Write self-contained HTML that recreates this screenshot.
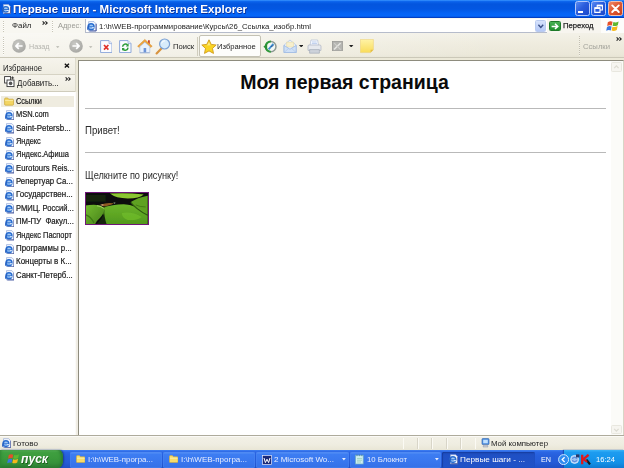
<!DOCTYPE html>
<html lang="ru">
<head>
<meta charset="utf-8">
<title>Первые шаги - Microsoft Internet Explorer</title>
<style>
*{box-sizing:border-box;margin:0;padding:0}
html,body{width:624px;height:468px;overflow:hidden;background:#fff}
body{position:relative;font-family:"Liberation Sans",sans-serif;font-size:8px;color:#000}
.a{position:absolute;display:block}
.t{position:absolute;white-space:pre;line-height:1;font-family:"Liberation Sans",sans-serif;transform-origin:0 50%}
svg{overflow:hidden}
</style>
</head>
<body>
<div class="a" style="left:0px;top:0px;width:624px;height:18.6px;background:linear-gradient(#3a96ff 0,#0a63ec 1.6px,#0355de 4px,#0357e2 9px,#0563f4 13px,#0566f8 15.8px,#0459e6 16.9px,#0238b8 17.7px,#0a3fc0 18.6px)"></div>
<svg class="a" style="left:1.6px;top:4.4px" width="9.0" height="10.0" viewBox="0 0 10 11"><path d="M1.6 0.6H7.2L9.5 3V10.4H1.6Z" fill="#f4f8ff" stroke="#8fa6d6" stroke-width="0.7"/><path d="M9.5 3V10.4H2.4" fill="none" stroke="#43539a" stroke-width="1"/><circle cx="4.2" cy="5.9" r="3.1" fill="#9fc8f6" stroke="#2a6ed0" stroke-width="1.5"/><path d="M1.4 6.1H7" stroke="#2a6ed0" stroke-width="1.1"/><path d="M5.2 7.6H7.6V6.6H5.2Z" fill="#f4f8ff"/><path d="M0.6 9.2Q0 6.4 2.2 4.4" stroke="#2458b8" stroke-width="1" fill="none"/></svg>
<div class="a" style="left:574.8px;top:1.3px;width:15px;height:15.2px;border-radius:2.5px;border:1px solid #b4c8fa;background:linear-gradient(135deg,#5a8cf4 0,#2a5cdc 45%,#1a48cc 100%)"></div><div class="a" style="left:577.8px;top:10.6px;width:5.6px;height:2.2px;background:#fff"></div>
<div class="a" style="left:591px;top:1.3px;width:15px;height:15.2px;border-radius:2.5px;border:1px solid #b4c8fa;background:linear-gradient(135deg,#5a8cf4 0,#2a5cdc 45%,#1a48cc 100%)"></div><svg class="a" style="left:591px;top:1.3px" width="15" height="15" viewBox="0 0 15 15"><path d="M6.2 4.2H11.4V9H6.2Z" fill="none" stroke="#fff" stroke-width="1.1"/><path d="M6.2 4.6H11.4" stroke="#fff" stroke-width="1.6"/><path d="M3.8 6.8H9V11.4H3.8Z" fill="#2a5cdc" stroke="#fff" stroke-width="1.1"/><path d="M3.8 7.2H9" stroke="#fff" stroke-width="1.6"/></svg>
<div class="a" style="left:607.6px;top:1.3px;width:15px;height:15.2px;border-radius:2.5px;border:1px solid #f0c0b0;background:linear-gradient(135deg,#ee8a6a 0,#e05a34 45%,#c83e1a 100%)"></div><svg class="a" style="left:607.6px;top:1.3px" width="15" height="15" viewBox="0 0 15 15"><path d="M4.2 4.4L10.8 11M10.8 4.4L4.2 11" stroke="#fff" stroke-width="1.9" stroke-linecap="round"/></svg>
<div class="a" style="left:0px;top:18.4px;width:624px;height:14.6px;background:#f8f7f1"></div>
<div class="a" style="left:0px;top:32.6px;width:624px;height:0.9px;background:#d2cfc0"></div>
<div class="a" style="left:2.6px;top:20.5px;width:1.2px;height:11px;background:repeating-linear-gradient(#c8c5b6 0,#c8c5b6 1px,#fff 1px,#fff 2px)"></div>
<div class="a" style="left:52px;top:20.5px;width:1.2px;height:11px;background:repeating-linear-gradient(#c8c5b6 0,#c8c5b6 1px,#fff 1px,#fff 2px)"></div>
<svg class="a" style="left:42px;top:20.7px" width="6" height="4" viewBox="0 0 6 4"><path d="M0.6 0.4L2.4 2L0.6 3.6M3.4 0.4L5.2 2L3.4 3.6" fill="none" stroke="#222" stroke-width="1.1"/></svg>
<div class="a" style="left:85px;top:18.6px;width:462px;height:14.4px;background:#fff;border:1px solid #b6bccb;border-right:0;border-top:0"></div>
<svg class="a" style="left:87.3px;top:21.2px" width="9.7" height="10.5" viewBox="0 0 10 11"><path d="M1.6 0.6H7.2L9.5 3V10.4H1.6Z" fill="#f4f8ff" stroke="#8fa6d6" stroke-width="0.7"/><path d="M9.5 3V10.4H2.4" fill="none" stroke="#43539a" stroke-width="1"/><circle cx="4.2" cy="5.9" r="3.1" fill="#9fc8f6" stroke="#2a6ed0" stroke-width="1.5"/><path d="M1.4 6.1H7" stroke="#2a6ed0" stroke-width="1.1"/><path d="M5.2 7.6H7.6V6.6H5.2Z" fill="#f4f8ff"/><path d="M0.6 9.2Q0 6.4 2.2 4.4" stroke="#2458b8" stroke-width="1" fill="none"/></svg>
<div class="a" style="left:534.6px;top:20px;width:11.6px;height:12px;border-radius:1.5px;background:linear-gradient(#d6e2fc,#b4c8f6);border:0.6px solid #b9cbf0"></div>
<svg class="a" style="left:534.6px;top:20px" width="12" height="12" viewBox="0 0 12 12"><path d="M3.4 4.8L5.8 7.4L8.2 4.8" fill="none" stroke="#3a4f86" stroke-width="1.4"/></svg>
<div class="a" style="left:547px;top:18.6px;width:53.5px;height:14.2px;background:#f7f5ef"></div>
<div class="a" style="left:549.4px;top:20.6px;width:11.4px;height:10.8px;border-radius:1.5px;background:linear-gradient(#49b254,#21902e);border:0.6px solid #1d7a28"></div>
<svg class="a" style="left:549.4px;top:20.6px" width="12" height="11" viewBox="0 0 12 11"><path d="M2.6 5.4H8.4M6 2.8L8.8 5.4L6 8" fill="none" stroke="#fff" stroke-width="1.5"/></svg>
<div class="a" style="left:600.5px;top:18.4px;width:23.5px;height:14.4px;background:#fdfdfb"></div>
<svg class="a" style="left:606px;top:19.6px" width="13.0" height="12.0" viewBox="-1.2 0 13 12"><path d="M0.6 2.2Q3 0.6 5.4 1.8L4.6 5.6Q2.4 4.6 0 6Z" fill="#e5502a"/><path d="M6.2 2Q8.6 3 11.4 1.4L10.6 5.2Q8 6.6 5.4 5.8Z" fill="#5fb830"/><path d="M-0.2 6.9Q2.2 5.5 4.4 6.5L3.6 10.4Q1.4 9.4 -1 10.8Z" fill="#3a78e0"/><path d="M5.2 6.7Q7.8 7.6 10.4 6.1L9.6 9.9Q7 11.4 4.4 10.6Z" fill="#f5b91a"/></svg>
<div class="a" style="left:0px;top:33.4px;width:624px;height:24.2px;background:linear-gradient(90deg,rgba(255,255,255,0.55) 0,rgba(255,255,255,0.35) 35%,rgba(255,255,255,0) 80%),linear-gradient(#f3f1e8 0,#efecdf 40%,#ebe8d9 85%,#e5e2d2 100%)"></div>
<div class="a" style="left:0px;top:57.2px;width:624px;height:1px;background:#cbc8b8"></div>
<div class="a" style="left:2.6px;top:36.5px;width:1.2px;height:18px;background:repeating-linear-gradient(#c8c5b6 0,#c8c5b6 1px,#fff 1px,#fff 2px)"></div>
<svg class="a" style="left:11.8px;top:39.3px" width="14" height="14" viewBox="0 0 14 14"><defs><radialGradient id="ng0" cx="40%" cy="35%" r="75%"><stop offset="0" stop-color="#c9c9c5"/><stop offset="1" stop-color="#a3a39f"/></radialGradient></defs><circle cx="7" cy="7" r="6.8" fill="url(#ng0)"/><path d="M10.6 7H4.2M6.8 4.2L3.8 7L6.8 9.8" fill="none" stroke="#fff" stroke-width="1.7" stroke-linejoin="round"/></svg>
<svg class="a" style="left:68.7px;top:39.3px" width="14" height="14" viewBox="0 0 14 14"><defs><radialGradient id="ng2" cx="40%" cy="35%" r="75%"><stop offset="0" stop-color="#c9c9c5"/><stop offset="1" stop-color="#a3a39f"/></radialGradient></defs><circle cx="7" cy="7" r="6.8" fill="url(#ng2)"/><path d="M3.4 7H9.8M7.2 4.2L10.2 7L7.2 9.8" fill="none" stroke="#fff" stroke-width="1.7" stroke-linejoin="round"/></svg>
<svg class="a" style="left:56.3px;top:45.6px" width="3.4" height="2.6" viewBox="0 0 3.4 2.6"><path d="M0 0H3.4L1.7 2.5Z" fill="#c4c4bc"/></svg>
<svg class="a" style="left:89.3px;top:45.6px" width="3.4" height="2.6" viewBox="0 0 3.4 2.6"><path d="M0 0H3.4L1.7 2.5Z" fill="#c4c4bc"/></svg>
<svg class="a" style="left:99.6px;top:39.6px" width="12.6" height="13.2" viewBox="0 0 12.6 13.2"><path d="M0.6 0.6H9L12 3.6V12.6H0.6Z" fill="#fbfcff" stroke="#8ea8da" stroke-width="1"/><path d="M9 0.6V3.6H12" fill="#dfe9fa" stroke="#8ea8da" stroke-width="0.7"/><path d="M4 5L8.4 9.6M8.4 5L4 9.6" stroke="#e0322a" stroke-width="1.7"/></svg>
<svg class="a" style="left:119px;top:39.6px" width="12.6" height="13.2" viewBox="0 0 12.6 13.2"><path d="M0.6 0.6H9L12 3.6V12.6H0.6Z" fill="#fbfcff" stroke="#8ea8da" stroke-width="1"/><path d="M9 0.6V3.6H12" fill="#dfe9fa" stroke="#8ea8da" stroke-width="0.7"/><path d="M3.6 6.8A2.8 2.8 0 0 1 8.6 5.2" fill="none" stroke="#2f9e3c" stroke-width="1.5"/><path d="M9.6 3.6V6.4H6.8Z" fill="#2f9e3c"/><path d="M9 7.6A2.8 2.8 0 0 1 4 9.2" fill="none" stroke="#2f9e3c" stroke-width="1.5"/><path d="M3 10.8V8H5.8Z" fill="#2f9e3c"/></svg>
<svg class="a" style="left:136.6px;top:38.2px" width="16" height="16" viewBox="0 0 16 16"><path d="M11 2.2H12.8V6H11Z" fill="#c8402a"/><path d="M0.6 8.2L7.8 1.4L15.2 8.2L13.6 9.4L7.8 4.2L2.2 9.4Z" fill="#f0a43c" stroke="#d08a2a" stroke-width="0.5"/><path d="M2.8 8.6L7.8 4.2L12.8 8.6V14.6H2.8Z" fill="#e9f1fc" stroke="#a9bfe2" stroke-width="0.7"/><path d="M6.6 10H9.2V14.6H6.6Z" fill="#6c94d8"/><path d="M2.8 14.8H12.8" stroke="#9ab0d4" stroke-width="0.9"/></svg>
<svg class="a" style="left:155.2px;top:37.6px" width="16" height="17" viewBox="0 0 16 17"><path d="M6.4 10.4L1.6 15.4" stroke="#d89440" stroke-width="2.2" stroke-linecap="round"/><circle cx="9.6" cy="6" r="5" fill="#d7ebfb" stroke="#7aa0d4" stroke-width="1.2"/><path d="M6.6 5.4A3.2 3.2 0 0 1 10 2.8" fill="none" stroke="#fff" stroke-width="1"/></svg>
<div class="a" style="left:196.8px;top:36.5px;width:0.8px;height:19px;background:#d0cdbd"></div>
<div class="a" style="left:198.8px;top:35.2px;width:62px;height:22px;background:#fdfdfb;border:0.8px solid #c4c2b4;border-radius:2px"></div>
<svg class="a" style="left:200.6px;top:39.2px" width="16" height="15.4" viewBox="0 0 16 15.4"><path d="M8 0.8L10.2 5.4L15.2 6L11.5 9.4L12.5 14.4L8 11.9L3.5 14.4L4.5 9.4L0.8 6L5.8 5.4Z" fill="#f9d423" stroke="#cf9a1c" stroke-width="0.9" stroke-linejoin="round"/><path d="M8 3L9.4 6.2L6 6.4Z" fill="#fdeb80"/></svg>
<svg class="a" style="left:263px;top:40px" width="15.4" height="13.2" viewBox="0 0 15.4 13.2"><circle cx="7.8" cy="6.6" r="5.2" fill="#f2f8f4" stroke="#8e9a94" stroke-width="1.5"/><path d="M7.8 1.4A5.2 5.2 0 0 0 7.8 11.8" fill="none" stroke="#2e9a3a" stroke-width="2"/><path d="M0.4 6.8L4.2 3.6V9.8Z" fill="#2a8f34"/><path d="M5.6 9.4L10.4 3.8" stroke="#3f8fd0" stroke-width="1.8"/><path d="M7.8 6.6L10.6 5.6" stroke="#2a4a8a" stroke-width="0.8"/></svg>
<svg class="a" style="left:283.4px;top:38.8px" width="14.2" height="14.6" viewBox="0 0 14.2 14.6"><path d="M1 6.2L7 1L13.2 6.2V13.6H1Z" fill="#eef4fc" stroke="#b4c8e6" stroke-width="0.8"/><path d="M3.6 3.2H10.6V8H3.6Z" fill="#f7efcc" stroke="#e6d69a" stroke-width="0.5"/><path d="M1 6.4L7 10.2L13.2 6.4V13.6H1Z" fill="#cfe0f6" stroke="#9ab8e2" stroke-width="0.8"/><path d="M1 13.6L5.6 9.4M13.2 13.6L8.6 9.4" stroke="#a8c2e6" stroke-width="0.6"/></svg>
<svg class="a" style="left:298.6px;top:44.8px" width="4.4" height="2.6" viewBox="0 0 4.4 2.6"><path d="M0 0H4.4L2.2 2.5Z" fill="#222"/></svg>
<svg class="a" style="left:307.2px;top:38.8px" width="15" height="15.4" viewBox="0 0 15 15.4"><path d="M4 1H10.6L11.6 6.6H3Z" fill="#f6f9ff" stroke="#b4c0d6" stroke-width="0.7"/><path d="M1 7Q1 6 2.2 6H12.6Q14 6 14 7.2V11.4H1Z" fill="#e6e9ee" stroke="#aab2c0" stroke-width="0.7"/><path d="M2.6 10.6H12.4V14.2H2.6Z" fill="#cdd2da" stroke="#9aa2b2" stroke-width="0.6"/><path d="M5 3H9.6M4.8 4.6H10" stroke="#a4bce4" stroke-width="0.7"/></svg>
<svg class="a" style="left:331.6px;top:40.8px" width="11" height="10.6" viewBox="0 0 11 10.6"><rect x="0.4" y="0.4" width="10" height="9.6" fill="#b4b4b0" stroke="#9a9a96" stroke-width="0.8"/><path d="M2 8.6L8.6 2" stroke="#e8e8e4" stroke-width="1.5"/><path d="M2.2 2.2L8.6 8.6" stroke="#d0d0cc" stroke-width="1.1"/></svg>
<svg class="a" style="left:349.40000000000003px;top:44.8px" width="4.4" height="2.6" viewBox="0 0 4.4 2.6"><path d="M0 0H4.4L2.2 2.5Z" fill="#222"/></svg>
<svg class="a" style="left:360px;top:39.4px" width="14" height="14.2" viewBox="0 0 14 14.2"><defs><linearGradient id="nt" x1="0" y1="0" x2="0" y2="1"><stop offset="0" stop-color="#fff3a6"/><stop offset="1" stop-color="#f9dc5a"/></linearGradient></defs><path d="M0.4 0.4H13.4V10.8L10.6 13.6H0.4Z" fill="url(#nt)" stroke="#ecd27a" stroke-width="0.6"/><path d="M13.4 10.8H10.6V13.6Z" fill="#e2bc48"/></svg>
<div class="a" style="left:578.8px;top:36px;width:0.9px;height:20px;background:repeating-linear-gradient(#c2bfb0 0,#c2bfb0 1px,#f4f2ea 1px,#f4f2ea 2px)"></div>
<svg class="a" style="left:616px;top:36.8px" width="6" height="4" viewBox="0 0 6 4"><path d="M0.6 0.4L2.4 2L0.6 3.6M3.4 0.4L5.2 2L3.4 3.6" fill="none" stroke="#222" stroke-width="1.1"/></svg>
<div class="a" style="left:0px;top:58.2px;width:624px;height:378px;background:#ece9d8"></div>
<div class="a" style="left:0px;top:58.2px;width:74.6px;height:16.2px;background:linear-gradient(#f6f4ec,#efede2)"></div>
<div class="a" style="left:0px;top:74.3px;width:74.6px;height:0.9px;background:#d6d3c4"></div>
<div class="a" style="left:0px;top:75.2px;width:74.6px;height:15.6px;background:linear-gradient(#f6f4ec,#efede2)"></div>
<div class="a" style="left:0px;top:90.6px;width:74.6px;height:1.2px;background:#cfccbc"></div>
<div class="a" style="left:0px;top:91.8px;width:76.2px;height:343.8px;background:linear-gradient(90deg,#fff 0,#fff 75px,#f6f4ee 76.2px)"></div>
<div class="a" style="left:74.6px;top:58.2px;width:1px;height:33.6px;background:#dedbcd"></div>
<div class="a" style="left:76.2px;top:91.8px;width:2px;height:343.8px;background:#f0ede4"></div>
<svg class="a" style="left:63.6px;top:62.6px" width="6" height="5.4" viewBox="0 0 6 5.4"><path d="M0.8 0.8L5 4.6M5 0.8L0.8 4.6" stroke="#111" stroke-width="1.3"/></svg>
<svg class="a" style="left:64.6px;top:77px" width="6" height="4" viewBox="0 0 6 4"><path d="M0.6 0.4L2.4 2L0.6 3.6M3.4 0.4L5.2 2L3.4 3.6" fill="none" stroke="#222" stroke-width="1.1"/></svg>
<svg class="a" style="left:3.6px;top:76.4px" width="11" height="11.4" viewBox="0 0 11 11.4"><rect x="0.6" y="0.6" width="6" height="6.4" fill="#fff" stroke="#333" stroke-width="0.9"/><rect x="3" y="4" width="7" height="6.6" fill="#fff" stroke="#333" stroke-width="0.9"/><circle cx="6.6" cy="7.4" r="1.8" fill="#555"/><path d="M8.6 0.4V3.4M7.1 1.9H10.1" stroke="#222" stroke-width="0.8"/></svg>
<div class="a" style="left:1.4px;top:95.8px;width:72.6px;height:11.4px;background:#efece0"></div>
<svg class="a" style="left:4.4px;top:96.9px" width="10.1" height="8.9" viewBox="0 0 10 9"><path d="M0.5 2.2Q0.5 1 1.6 1H3.6L4.6 2.2H8.6Q9.5 2.2 9.5 3.2V7.4Q9.5 8.3 8.6 8.3H1.4Q0.5 8.3 0.5 7.4Z" fill="#f3d562" stroke="#c9a536" stroke-width="0.7"/><path d="M1 3.6H9" stroke="#fbe9a0" stroke-width="1"/></svg>
<svg class="a" style="left:4.8px;top:109.77999999999999px" width="9.5" height="10.5" viewBox="0 0 10 11"><path d="M1.6 0.6H7.2L9.5 3V10.4H1.6Z" fill="#f4f8ff" stroke="#8fa6d6" stroke-width="0.7"/><path d="M9.5 3V10.4H2.4" fill="none" stroke="#43539a" stroke-width="1"/><circle cx="4.2" cy="5.9" r="3.1" fill="#9fc8f6" stroke="#2a6ed0" stroke-width="1.5"/><path d="M1.4 6.1H7" stroke="#2a6ed0" stroke-width="1.1"/><path d="M5.2 7.6H7.6V6.6H5.2Z" fill="#f4f8ff"/><path d="M0.6 9.2Q0 6.4 2.2 4.4" stroke="#2458b8" stroke-width="1" fill="none"/></svg>
<svg class="a" style="left:4.8px;top:123.15999999999998px" width="9.5" height="10.5" viewBox="0 0 10 11"><path d="M1.6 0.6H7.2L9.5 3V10.4H1.6Z" fill="#f4f8ff" stroke="#8fa6d6" stroke-width="0.7"/><path d="M9.5 3V10.4H2.4" fill="none" stroke="#43539a" stroke-width="1"/><circle cx="4.2" cy="5.9" r="3.1" fill="#9fc8f6" stroke="#2a6ed0" stroke-width="1.5"/><path d="M1.4 6.1H7" stroke="#2a6ed0" stroke-width="1.1"/><path d="M5.2 7.6H7.6V6.6H5.2Z" fill="#f4f8ff"/><path d="M0.6 9.2Q0 6.4 2.2 4.4" stroke="#2458b8" stroke-width="1" fill="none"/></svg>
<svg class="a" style="left:4.8px;top:136.54000000000002px" width="9.5" height="10.5" viewBox="0 0 10 11"><path d="M1.6 0.6H7.2L9.5 3V10.4H1.6Z" fill="#f4f8ff" stroke="#8fa6d6" stroke-width="0.7"/><path d="M9.5 3V10.4H2.4" fill="none" stroke="#43539a" stroke-width="1"/><circle cx="4.2" cy="5.9" r="3.1" fill="#9fc8f6" stroke="#2a6ed0" stroke-width="1.5"/><path d="M1.4 6.1H7" stroke="#2a6ed0" stroke-width="1.1"/><path d="M5.2 7.6H7.6V6.6H5.2Z" fill="#f4f8ff"/><path d="M0.6 9.2Q0 6.4 2.2 4.4" stroke="#2458b8" stroke-width="1" fill="none"/></svg>
<svg class="a" style="left:4.8px;top:149.92000000000002px" width="9.5" height="10.5" viewBox="0 0 10 11"><path d="M1.6 0.6H7.2L9.5 3V10.4H1.6Z" fill="#f4f8ff" stroke="#8fa6d6" stroke-width="0.7"/><path d="M9.5 3V10.4H2.4" fill="none" stroke="#43539a" stroke-width="1"/><circle cx="4.2" cy="5.9" r="3.1" fill="#9fc8f6" stroke="#2a6ed0" stroke-width="1.5"/><path d="M1.4 6.1H7" stroke="#2a6ed0" stroke-width="1.1"/><path d="M5.2 7.6H7.6V6.6H5.2Z" fill="#f4f8ff"/><path d="M0.6 9.2Q0 6.4 2.2 4.4" stroke="#2458b8" stroke-width="1" fill="none"/></svg>
<svg class="a" style="left:4.8px;top:163.3px" width="9.5" height="10.5" viewBox="0 0 10 11"><path d="M1.6 0.6H7.2L9.5 3V10.4H1.6Z" fill="#f4f8ff" stroke="#8fa6d6" stroke-width="0.7"/><path d="M9.5 3V10.4H2.4" fill="none" stroke="#43539a" stroke-width="1"/><circle cx="4.2" cy="5.9" r="3.1" fill="#9fc8f6" stroke="#2a6ed0" stroke-width="1.5"/><path d="M1.4 6.1H7" stroke="#2a6ed0" stroke-width="1.1"/><path d="M5.2 7.6H7.6V6.6H5.2Z" fill="#f4f8ff"/><path d="M0.6 9.2Q0 6.4 2.2 4.4" stroke="#2458b8" stroke-width="1" fill="none"/></svg>
<svg class="a" style="left:4.8px;top:176.68px" width="9.5" height="10.5" viewBox="0 0 10 11"><path d="M1.6 0.6H7.2L9.5 3V10.4H1.6Z" fill="#f4f8ff" stroke="#8fa6d6" stroke-width="0.7"/><path d="M9.5 3V10.4H2.4" fill="none" stroke="#43539a" stroke-width="1"/><circle cx="4.2" cy="5.9" r="3.1" fill="#9fc8f6" stroke="#2a6ed0" stroke-width="1.5"/><path d="M1.4 6.1H7" stroke="#2a6ed0" stroke-width="1.1"/><path d="M5.2 7.6H7.6V6.6H5.2Z" fill="#f4f8ff"/><path d="M0.6 9.2Q0 6.4 2.2 4.4" stroke="#2458b8" stroke-width="1" fill="none"/></svg>
<svg class="a" style="left:4.8px;top:190.06px" width="9.5" height="10.5" viewBox="0 0 10 11"><path d="M1.6 0.6H7.2L9.5 3V10.4H1.6Z" fill="#f4f8ff" stroke="#8fa6d6" stroke-width="0.7"/><path d="M9.5 3V10.4H2.4" fill="none" stroke="#43539a" stroke-width="1"/><circle cx="4.2" cy="5.9" r="3.1" fill="#9fc8f6" stroke="#2a6ed0" stroke-width="1.5"/><path d="M1.4 6.1H7" stroke="#2a6ed0" stroke-width="1.1"/><path d="M5.2 7.6H7.6V6.6H5.2Z" fill="#f4f8ff"/><path d="M0.6 9.2Q0 6.4 2.2 4.4" stroke="#2458b8" stroke-width="1" fill="none"/></svg>
<svg class="a" style="left:4.8px;top:203.44px" width="9.5" height="10.5" viewBox="0 0 10 11"><path d="M1.6 0.6H7.2L9.5 3V10.4H1.6Z" fill="#f4f8ff" stroke="#8fa6d6" stroke-width="0.7"/><path d="M9.5 3V10.4H2.4" fill="none" stroke="#43539a" stroke-width="1"/><circle cx="4.2" cy="5.9" r="3.1" fill="#9fc8f6" stroke="#2a6ed0" stroke-width="1.5"/><path d="M1.4 6.1H7" stroke="#2a6ed0" stroke-width="1.1"/><path d="M5.2 7.6H7.6V6.6H5.2Z" fill="#f4f8ff"/><path d="M0.6 9.2Q0 6.4 2.2 4.4" stroke="#2458b8" stroke-width="1" fill="none"/></svg>
<svg class="a" style="left:4.8px;top:216.82px" width="9.5" height="10.5" viewBox="0 0 10 11"><path d="M1.6 0.6H7.2L9.5 3V10.4H1.6Z" fill="#f4f8ff" stroke="#8fa6d6" stroke-width="0.7"/><path d="M9.5 3V10.4H2.4" fill="none" stroke="#43539a" stroke-width="1"/><circle cx="4.2" cy="5.9" r="3.1" fill="#9fc8f6" stroke="#2a6ed0" stroke-width="1.5"/><path d="M1.4 6.1H7" stroke="#2a6ed0" stroke-width="1.1"/><path d="M5.2 7.6H7.6V6.6H5.2Z" fill="#f4f8ff"/><path d="M0.6 9.2Q0 6.4 2.2 4.4" stroke="#2458b8" stroke-width="1" fill="none"/></svg>
<svg class="a" style="left:4.8px;top:230.20000000000002px" width="9.5" height="10.5" viewBox="0 0 10 11"><path d="M1.6 0.6H7.2L9.5 3V10.4H1.6Z" fill="#f4f8ff" stroke="#8fa6d6" stroke-width="0.7"/><path d="M9.5 3V10.4H2.4" fill="none" stroke="#43539a" stroke-width="1"/><circle cx="4.2" cy="5.9" r="3.1" fill="#9fc8f6" stroke="#2a6ed0" stroke-width="1.5"/><path d="M1.4 6.1H7" stroke="#2a6ed0" stroke-width="1.1"/><path d="M5.2 7.6H7.6V6.6H5.2Z" fill="#f4f8ff"/><path d="M0.6 9.2Q0 6.4 2.2 4.4" stroke="#2458b8" stroke-width="1" fill="none"/></svg>
<svg class="a" style="left:4.8px;top:243.58px" width="9.5" height="10.5" viewBox="0 0 10 11"><path d="M1.6 0.6H7.2L9.5 3V10.4H1.6Z" fill="#f4f8ff" stroke="#8fa6d6" stroke-width="0.7"/><path d="M9.5 3V10.4H2.4" fill="none" stroke="#43539a" stroke-width="1"/><circle cx="4.2" cy="5.9" r="3.1" fill="#9fc8f6" stroke="#2a6ed0" stroke-width="1.5"/><path d="M1.4 6.1H7" stroke="#2a6ed0" stroke-width="1.1"/><path d="M5.2 7.6H7.6V6.6H5.2Z" fill="#f4f8ff"/><path d="M0.6 9.2Q0 6.4 2.2 4.4" stroke="#2458b8" stroke-width="1" fill="none"/></svg>
<svg class="a" style="left:4.8px;top:256.96px" width="9.5" height="10.5" viewBox="0 0 10 11"><path d="M1.6 0.6H7.2L9.5 3V10.4H1.6Z" fill="#f4f8ff" stroke="#8fa6d6" stroke-width="0.7"/><path d="M9.5 3V10.4H2.4" fill="none" stroke="#43539a" stroke-width="1"/><circle cx="4.2" cy="5.9" r="3.1" fill="#9fc8f6" stroke="#2a6ed0" stroke-width="1.5"/><path d="M1.4 6.1H7" stroke="#2a6ed0" stroke-width="1.1"/><path d="M5.2 7.6H7.6V6.6H5.2Z" fill="#f4f8ff"/><path d="M0.6 9.2Q0 6.4 2.2 4.4" stroke="#2458b8" stroke-width="1" fill="none"/></svg>
<svg class="a" style="left:4.8px;top:270.34px" width="9.5" height="10.5" viewBox="0 0 10 11"><path d="M1.6 0.6H7.2L9.5 3V10.4H1.6Z" fill="#f4f8ff" stroke="#8fa6d6" stroke-width="0.7"/><path d="M9.5 3V10.4H2.4" fill="none" stroke="#43539a" stroke-width="1"/><circle cx="4.2" cy="5.9" r="3.1" fill="#9fc8f6" stroke="#2a6ed0" stroke-width="1.5"/><path d="M1.4 6.1H7" stroke="#2a6ed0" stroke-width="1.1"/><path d="M5.2 7.6H7.6V6.6H5.2Z" fill="#f4f8ff"/><path d="M0.6 9.2Q0 6.4 2.2 4.4" stroke="#2458b8" stroke-width="1" fill="none"/></svg>
<div class="a" style="left:78.2px;top:60px;width:545.8px;height:376px;background:#fff;border:1.2px solid #8e8c7e;border-right:1.4px solid #d8d5c6;border-bottom:1px solid #9d9b8d"></div>
<div class="a" style="left:611px;top:61.4px;width:11.6px;height:373.6px;background:#fbfbf8"></div>
<div class="a" style="left:611.4px;top:62.4px;width:10.6px;height:9.8px;background:#f6f5f0;border:0.6px solid #e8e7df;border-radius:1.5px"></div>
<svg class="a" style="left:611.4px;top:62.4px" width="11" height="10" viewBox="0 0 11 10"><path d="M3.2 6.2L5.4 3.8L7.6 6.2" fill="none" stroke="#dcdbd2" stroke-width="1.2"/></svg>
<div class="a" style="left:611.4px;top:424.6px;width:10.6px;height:9.8px;background:#f6f5f0;border:0.6px solid #e8e7df;border-radius:1.5px"></div>
<svg class="a" style="left:611.4px;top:424.6px" width="11" height="10" viewBox="0 0 11 10"><path d="M3.2 3.8L5.4 6.2L7.6 3.8" fill="none" stroke="#dcdbd2" stroke-width="1.2"/></svg>
<h1 class="a" style="left:79.5px;top:70.6px;width:530px;text-align:center;font-size:19.5px;line-height:22px;font-weight:bold;color:#0a0a0a">Моя первая страница</h1>
<div class="a" style="left:84.8px;top:108.1px;width:520.8px;height:1.3px;background:#b9b9b9"></div>
<div class="a" style="left:84.8px;top:152px;width:520.8px;height:1.3px;background:#b9b9b9"></div>
<svg class="a" style="left:85.1px;top:191.8px;border:1.2px solid #6f1678" width="63.7" height="32.9" viewBox="0 0 62 31" preserveAspectRatio="none"><defs><filter id="bl" x="-10%" y="-10%" width="120%" height="120%"><feGaussianBlur stdDeviation="0.75"/></filter><clipPath id="cp"><rect x="0" y="0" width="62" height="31"/></clipPath><linearGradient id="lg1" x1="0" y1="0" x2="0" y2="1"><stop offset="0" stop-color="#6cb42a"/><stop offset="1" stop-color="#4f961c"/></linearGradient><linearGradient id="lg2" x1="0" y1="0" x2="1" y2="1"><stop offset="0" stop-color="#74bc30"/><stop offset="1" stop-color="#447f18"/></linearGradient></defs><rect x="-1" y="-1" width="64" height="33" fill="#0d0f08"/><g clip-path="url(#cp)"><g filter="url(#bl)"><rect x="-2" y="-2" width="66" height="35" fill="#0d0f08"/><path d="M-1 2H20V9H-1Z" fill="#12200c"/><path d="M24 0.6Q40 -0.6 58 1.4Q54 5.4 42 5.6Q30 5.4 24 0.6Z" fill="#8cc632"/><path d="M45 9Q52 4.5 63 2.5V24Q52 20 45 9Z" fill="#5ea122"/><path d="M17 15Q26 11.4 38 11.4Q50 11.6 63 22V33H21Q16 24 17 15Z" fill="url(#lg1)"/><path d="M36 20Q46 18 56 24Q50 28 42 27Q36 25 36 20Z" fill="#6fba2a" opacity="0.8"/><path d="M-1 12.6Q7 11.4 13 12.2Q17 13.4 18.4 15.6Q18 21 14 25Q10 28 8 33H-1Z" fill="url(#lg2)"/><path d="M11 12.8Q15 13 18 15.4" stroke="#a4d660" stroke-width="1.1" fill="none"/><path d="M15 11.6Q21 9.2 28 10.4Q24 13.4 17 13.2Z" fill="#8e5a24"/><path d="M13.4 12L17.4 11.2L17.4 12.8Z" fill="#d8b48a"/><path d="M27.4 9.6L29.6 9.4L29 11.2Z" fill="#7a827a"/><path d="M18.4 16Q17.8 23 21 32H10Q13 28.4 16 25Q18 21 18.4 16Z" fill="#16280c"/><path d="M45 9.4Q50 16 62 22.4" stroke="#2f5c10" stroke-width="1.1" fill="none"/><path d="M50 12Q54 14 60 14" stroke="#3f7416" stroke-width="0.8" fill="none"/><path d="M0 22Q5 24 8 30" stroke="#3d7a16" stroke-width="1.2" fill="none"/></g></g></svg>
<div class="a" style="left:0px;top:435.4px;width:624px;height:0.9px;background:#aeab9c"></div>
<div class="a" style="left:0px;top:436px;width:624px;height:13.8px;background:linear-gradient(#f3f1e7 0,#efede1 60%,#e9e6d6 100%)"></div>
<div class="a" style="left:0px;top:436px;width:624px;height:0.8px;background:#fbfaf6"></div>
<div class="a" style="left:402.6px;top:438px;width:0.8px;height:11px;background:#d8d5c8"></div>
<div class="a" style="left:403.40000000000003px;top:438px;width:0.8px;height:11px;background:#fbfaf4"></div>
<div class="a" style="left:417px;top:438px;width:0.8px;height:11px;background:#d8d5c8"></div>
<div class="a" style="left:417.8px;top:438px;width:0.8px;height:11px;background:#fbfaf4"></div>
<div class="a" style="left:431.4px;top:438px;width:0.8px;height:11px;background:#d8d5c8"></div>
<div class="a" style="left:432.2px;top:438px;width:0.8px;height:11px;background:#fbfaf4"></div>
<div class="a" style="left:446px;top:438px;width:0.8px;height:11px;background:#d8d5c8"></div>
<div class="a" style="left:446.8px;top:438px;width:0.8px;height:11px;background:#fbfaf4"></div>
<div class="a" style="left:460.4px;top:438px;width:0.8px;height:11px;background:#d8d5c8"></div>
<div class="a" style="left:461.2px;top:438px;width:0.8px;height:11px;background:#fbfaf4"></div>
<div class="a" style="left:474.6px;top:438px;width:0.8px;height:11px;background:#d8d5c8"></div>
<div class="a" style="left:475.40000000000003px;top:438px;width:0.8px;height:11px;background:#fbfaf4"></div>
<svg class="a" style="left:1.6px;top:437.8px" width="9.3" height="10.5" viewBox="0 0 10 11"><path d="M1.6 0.6H7.2L9.5 3V10.4H1.6Z" fill="#f4f8ff" stroke="#8fa6d6" stroke-width="0.7"/><path d="M9.5 3V10.4H2.4" fill="none" stroke="#43539a" stroke-width="1"/><circle cx="4.2" cy="5.9" r="3.1" fill="#9fc8f6" stroke="#2a6ed0" stroke-width="1.5"/><path d="M1.4 6.1H7" stroke="#2a6ed0" stroke-width="1.1"/><path d="M5.2 7.6H7.6V6.6H5.2Z" fill="#f4f8ff"/><path d="M0.6 9.2Q0 6.4 2.2 4.4" stroke="#2458b8" stroke-width="1" fill="none"/></svg>
<svg class="a" style="left:481px;top:438px" width="9" height="10" viewBox="0 0 9 10"><rect x="1" y="0.6" width="7" height="6" rx="0.8" fill="#4f8fe0" stroke="#3a6ab0" stroke-width="0.7"/><rect x="2.2" y="1.8" width="4.6" height="3.4" fill="#bfe0ff"/><path d="M2 9H7L6.2 7H2.8Z" fill="#c9cdd6" stroke="#8f97a6" stroke-width="0.5"/></svg>
<div class="a" style="left:0px;top:449.7px;width:624px;height:18.3px;background:linear-gradient(#3f80f2 0,#2b66e4 2px,#265fdc 6px,#255cd8 12px,#1f50c6 18.3px)"></div>
<div class="a" style="left:0px;top:449.7px;width:63.2px;height:18.3px;border-radius:0 4px 5px 0/0 7px 8px 0;background:linear-gradient(#58b058 0,#3f9f40 2.6px,#3b9a3c 8px,#35913a 13px,#2a7830 18.3px);box-shadow:1.2px 0 1.6px #1a3f9a,inset -3px 0 3px -1px #2a7a30,inset 2px 0 3px -1px #2f8534"></div>
<svg class="a" style="left:6.6px;top:453.4px" width="12.35" height="11.399999999999999" viewBox="-1.2 0 13 12"><path d="M0.6 2.2Q3 0.6 5.4 1.8L4.6 5.6Q2.4 4.6 0 6Z" fill="#e5502a"/><path d="M6.2 2Q8.6 3 11.4 1.4L10.6 5.2Q8 6.6 5.4 5.8Z" fill="#5fb830"/><path d="M-0.2 6.9Q2.2 5.5 4.4 6.5L3.6 10.4Q1.4 9.4 -1 10.8Z" fill="#3a78e0"/><path d="M5.2 6.7Q7.8 7.6 10.4 6.1L9.6 9.9Q7 11.4 4.4 10.6Z" fill="#f5b91a"/></svg>
<div class="a" style="left:70px;top:451.6px;width:91.6px;height:16.4px;border-radius:2px;background:linear-gradient(#5b95f8 0,#3d7df2 2.4px,#3876ee 10px,#3470e6 16.4px);box-shadow:inset 0 0 0 0.5px #4a84f0"></div>
<div class="a" style="left:163px;top:451.6px;width:92px;height:16.4px;border-radius:2px;background:linear-gradient(#5b95f8 0,#3d7df2 2.4px,#3876ee 10px,#3470e6 16.4px);box-shadow:inset 0 0 0 0.5px #4a84f0"></div>
<div class="a" style="left:256.4px;top:451.6px;width:92.4px;height:16.4px;border-radius:2px;background:linear-gradient(#5b95f8 0,#3d7df2 2.4px,#3876ee 10px,#3470e6 16.4px);box-shadow:inset 0 0 0 0.5px #4a84f0"></div>
<div class="a" style="left:350px;top:451.6px;width:91.4px;height:16.4px;border-radius:2px;background:linear-gradient(#5b95f8 0,#3d7df2 2.4px,#3876ee 10px,#3470e6 16.4px);box-shadow:inset 0 0 0 0.5px #4a84f0"></div>
<div class="a" style="left:442.4px;top:451.6px;width:92.6px;height:16.4px;border-radius:2px;background:linear-gradient(#1c49b6 0,#1f50c4 3px,#2053c8 16.4px);box-shadow:inset 0.6px 0.6px 1px #123590"></div>
<svg class="a" style="left:76px;top:455.4px" width="9.4" height="8" viewBox="0 0 9.4 8"><path d="M0.4 1.6Q0.4 0.6 1.4 0.6H3.4L4.4 1.8H8.2Q9 1.8 9 2.8V6.8Q9 7.6 8.2 7.6H1.2Q0.4 7.6 0.4 6.8Z" fill="#f7dc6a" stroke="#d0a93a" stroke-width="0.6"/><path d="M1 3.2H8.6" stroke="#fdf0b0" stroke-width="0.9"/></svg>
<svg class="a" style="left:168.6px;top:455.4px" width="9.4" height="8" viewBox="0 0 9.4 8"><path d="M0.4 1.6Q0.4 0.6 1.4 0.6H3.4L4.4 1.8H8.2Q9 1.8 9 2.8V6.8Q9 7.6 8.2 7.6H1.2Q0.4 7.6 0.4 6.8Z" fill="#f7dc6a" stroke="#d0a93a" stroke-width="0.6"/><path d="M1 3.2H8.6" stroke="#fdf0b0" stroke-width="0.9"/></svg>
<svg class="a" style="left:262.2px;top:454.6px" width="10" height="10" viewBox="0 0 10 10"><rect x="0.4" y="0.4" width="9.2" height="9.2" fill="#1b2a78" stroke="#e8ecff" stroke-width="0.7"/><path d="M2 3L3.4 7.6L5 4.2L6.6 7.6L8 3" fill="none" stroke="#fff" stroke-width="1"/></svg>
<svg class="a" style="left:355px;top:454.4px" width="9" height="10.4" viewBox="0 0 9 10.4"><rect x="0.6" y="1.2" width="7.6" height="8.8" fill="#cfeef0" stroke="#6fb0c0" stroke-width="0.7"/><path d="M2 0.4V2.2M4.4 0.4V2.2M6.8 0.4V2.2" stroke="#4a7a9a" stroke-width="0.7"/><path d="M2 4.4H7M2 6.2H7M2 8H6" stroke="#7fc0a0" stroke-width="0.6"/></svg>
<svg class="a" style="left:448.8px;top:454.2px" width="9.3" height="10.5" viewBox="0 0 10 11"><path d="M1.6 0.6H7.2L9.5 3V10.4H1.6Z" fill="#f4f8ff" stroke="#8fa6d6" stroke-width="0.7"/><path d="M9.5 3V10.4H2.4" fill="none" stroke="#43539a" stroke-width="1"/><circle cx="4.2" cy="5.9" r="3.1" fill="#9fc8f6" stroke="#2a6ed0" stroke-width="1.5"/><path d="M1.4 6.1H7" stroke="#2a6ed0" stroke-width="1.1"/><path d="M5.2 7.6H7.6V6.6H5.2Z" fill="#f4f8ff"/><path d="M0.6 9.2Q0 6.4 2.2 4.4" stroke="#2458b8" stroke-width="1" fill="none"/></svg>
<svg class="a" style="left:342.1px;top:458.4px" width="3.8" height="2.6" viewBox="0 0 3.8 2.6"><path d="M0 0H3.8L1.9 2.5Z" fill="#e8eeff"/></svg>
<svg class="a" style="left:435.1px;top:458.4px" width="3.8" height="2.6" viewBox="0 0 3.8 2.6"><path d="M0 0H3.8L1.9 2.5Z" fill="#e8eeff"/></svg>
<div class="a" style="left:563.6px;top:449.7px;width:60.4px;height:18.3px;background:linear-gradient(#3ab4f8 0,#1d9cf0 2.4px,#1696ec 8px,#1290e6 13px,#0f78d0 18.3px);box-shadow:-1px 0 1px #1a4fb8"></div>
<svg class="a" style="left:557.6px;top:453.6px" width="11.2" height="11.2" viewBox="0 0 11.2 11.2"><circle cx="5.6" cy="5.6" r="5" fill="#2f8cf0" stroke="#cfe4ff" stroke-width="1"/><path d="M6.6 3.2L4.2 5.6L6.6 8" fill="none" stroke="#fff" stroke-width="1.3"/></svg>
<svg class="a" style="left:569.6px;top:454px" width="10" height="10.4" viewBox="0 0 10 10.4"><circle cx="4.6" cy="5.4" r="4" fill="#9cc4f0" stroke="#e8f0ff" stroke-width="0.8"/><path d="M2 4.4Q4.6 2.4 7.2 4.4M2 6.6Q4.6 8.6 7.2 6.6" stroke="#3a6ad0" stroke-width="0.8" fill="none"/><rect x="6" y="0.4" width="3.4" height="3" fill="#2a3a6a"/></svg>
<svg class="a" style="left:580.4px;top:453.6px" width="11" height="11" viewBox="0 0 11 11"><path d="M6.4 5.6L10 10.4" stroke="#1a1a1a" stroke-width="2.2"/><path d="M2.2 0.8V10.2M2.6 5.8L8.6 0.8" stroke="#e0181c" stroke-width="2.3" fill="none"/><path d="M4 5.4L7 8" stroke="#e0181c" stroke-width="2" fill="none"/></svg>
<span class="t" style="left:13.3px;top:3.40px;font-size:11.7px;color:#fff;transform:scaleX(0.9878);font-weight:bold;text-shadow:0.6px 0.6px 0.5px #0a2f9a">Первые шаги - Microsoft Internet Explorer</span>
<span class="t" style="left:12.0px;top:21.83px;font-size:8px;color:#222;transform:scaleX(0.9862);">Файл</span>
<span class="t" style="left:58.2px;top:21.83px;font-size:8px;color:#9a9a94;transform:scaleX(0.9274);">Адрес:</span>
<span class="t" style="left:98.5px;top:22.53px;font-size:8px;color:#222;transform:scaleX(0.9636);">1:\h\WEB-программирование\Курсы\26_Ссылка_изобр.html</span>
<span class="t" style="left:563.0px;top:22.13px;font-size:8px;color:#222;transform:scaleX(0.9597);-webkit-text-stroke:0.25px #222">Переход</span>
<span class="t" style="left:28.5px;top:42.73px;font-size:8px;color:#b4b4ae;transform:scaleX(0.8943);">Назад</span>
<span class="t" style="left:173.0px;top:42.73px;font-size:8px;color:#222;transform:scaleX(0.9471);">Поиск</span>
<span class="t" style="left:217.3px;top:42.73px;font-size:8px;color:#222;transform:scaleX(0.9545);">Избранное</span>
<span class="t" style="left:583.0px;top:42.73px;font-size:8px;color:#a4a49c;transform:scaleX(0.9584);">Ссылки</span>
<span class="t" style="left:3.0px;top:63.97px;font-size:8.3px;color:#222;transform:scaleX(0.9272);">Избранное</span>
<span class="t" style="left:17.0px;top:78.97px;font-size:8.3px;color:#222;transform:scaleX(0.9566);">Добавить...</span>
<span class="t" style="left:16.2px;top:97.76px;font-size:8.2px;color:#1c1c1c;transform:scaleX(0.8950);-webkit-text-stroke:0.2px #1c1c1c">Ссылки</span>
<span class="t" style="left:16.2px;top:111.14px;font-size:8.2px;color:#1c1c1c;transform:scaleX(0.9127);-webkit-text-stroke:0.2px #1c1c1c">MSN.com</span>
<span class="t" style="left:16.2px;top:124.52px;font-size:8.2px;color:#1c1c1c;transform:scaleX(0.9710);-webkit-text-stroke:0.2px #1c1c1c">Saint-Petersb...</span>
<span class="t" style="left:16.2px;top:137.90px;font-size:8.2px;color:#1c1c1c;transform:scaleX(0.9003);-webkit-text-stroke:0.2px #1c1c1c">Яндекс</span>
<span class="t" style="left:16.2px;top:151.28px;font-size:8.2px;color:#1c1c1c;transform:scaleX(0.9135);-webkit-text-stroke:0.2px #1c1c1c">Яндекс.Афиша</span>
<span class="t" style="left:16.2px;top:164.66px;font-size:8.2px;color:#1c1c1c;transform:scaleX(0.9478);-webkit-text-stroke:0.2px #1c1c1c">Eurotours Reis...</span>
<span class="t" style="left:16.2px;top:178.04px;font-size:8.2px;color:#1c1c1c;transform:scaleX(0.9526);-webkit-text-stroke:0.2px #1c1c1c">Репертуар Са...</span>
<span class="t" style="left:16.2px;top:191.42px;font-size:8.2px;color:#1c1c1c;transform:scaleX(0.9751);-webkit-text-stroke:0.2px #1c1c1c">Государствен...</span>
<span class="t" style="left:16.2px;top:204.80px;font-size:8.2px;color:#1c1c1c;transform:scaleX(0.9248);-webkit-text-stroke:0.2px #1c1c1c">РМИЦ. Россий...</span>
<span class="t" style="left:16.2px;top:218.18px;font-size:8.2px;color:#1c1c1c;transform:scaleX(0.9468);-webkit-text-stroke:0.2px #1c1c1c">ПМ-ПУ  Факул...</span>
<span class="t" style="left:16.2px;top:231.56px;font-size:8.2px;color:#1c1c1c;transform:scaleX(0.9080);-webkit-text-stroke:0.2px #1c1c1c">Яндекс Паспорт</span>
<span class="t" style="left:16.2px;top:244.94px;font-size:8.2px;color:#1c1c1c;transform:scaleX(0.9639);-webkit-text-stroke:0.2px #1c1c1c">Программы р...</span>
<span class="t" style="left:16.2px;top:258.32px;font-size:8.2px;color:#1c1c1c;transform:scaleX(0.9704);-webkit-text-stroke:0.2px #1c1c1c">Концерты в К...</span>
<span class="t" style="left:16.2px;top:271.70px;font-size:8.2px;color:#1c1c1c;transform:scaleX(0.9516);-webkit-text-stroke:0.2px #1c1c1c">Санкт-Петерб...</span>
<span class="t" style="left:85.4px;top:126.13px;font-size:10px;color:#2a2a2a;transform:scaleX(0.9633);">Привет!</span>
<span class="t" style="left:85.4px;top:170.53px;font-size:10px;color:#2a2a2a;transform:scaleX(0.9209);">Щелкните по рисунку!</span>
<span class="t" style="left:13.0px;top:440.03px;font-size:8px;color:#222;transform:scaleX(1.0120);">Готово</span>
<span class="t" style="left:491.0px;top:440.03px;font-size:8px;color:#222;transform:scaleX(0.9788);">Мой компьютер</span>
<span class="t" style="left:21.0px;top:453.42px;font-size:12.5px;color:#fff;transform:scaleX(0.9686);font-weight:bold;font-style:italic;text-shadow:0.7px 0.7px 0.6px #1d5a1d">пуск</span>
<span class="t" style="left:88.0px;top:455.73px;font-size:8px;color:#e8eeff;transform:scaleX(0.9855);">I:\h\WEB-програ...</span>
<span class="t" style="left:181.0px;top:455.73px;font-size:8px;color:#e8eeff;transform:scaleX(1.0007);">I:\h\WEB-програ...</span>
<span class="t" style="left:274.0px;top:455.73px;font-size:8px;color:#e8eeff;transform:scaleX(1.0021);">2 Microsoft Wo...</span>
<span class="t" style="left:367.0px;top:455.73px;font-size:8px;color:#e8eeff;transform:scaleX(0.9675);">10 Блокнот</span>
<span class="t" style="left:460.0px;top:455.73px;font-size:8px;color:#fff;transform:scaleX(1.0259);">Первые шаги - ...</span>
<span class="t" style="left:541.0px;top:455.73px;font-size:8px;color:#fff;transform:scaleX(0.8989);">EN</span>
<span class="t" style="left:596.0px;top:455.73px;font-size:8px;color:#fff;transform:scaleX(0.9485);">16:24</span>
</body>
</html>
